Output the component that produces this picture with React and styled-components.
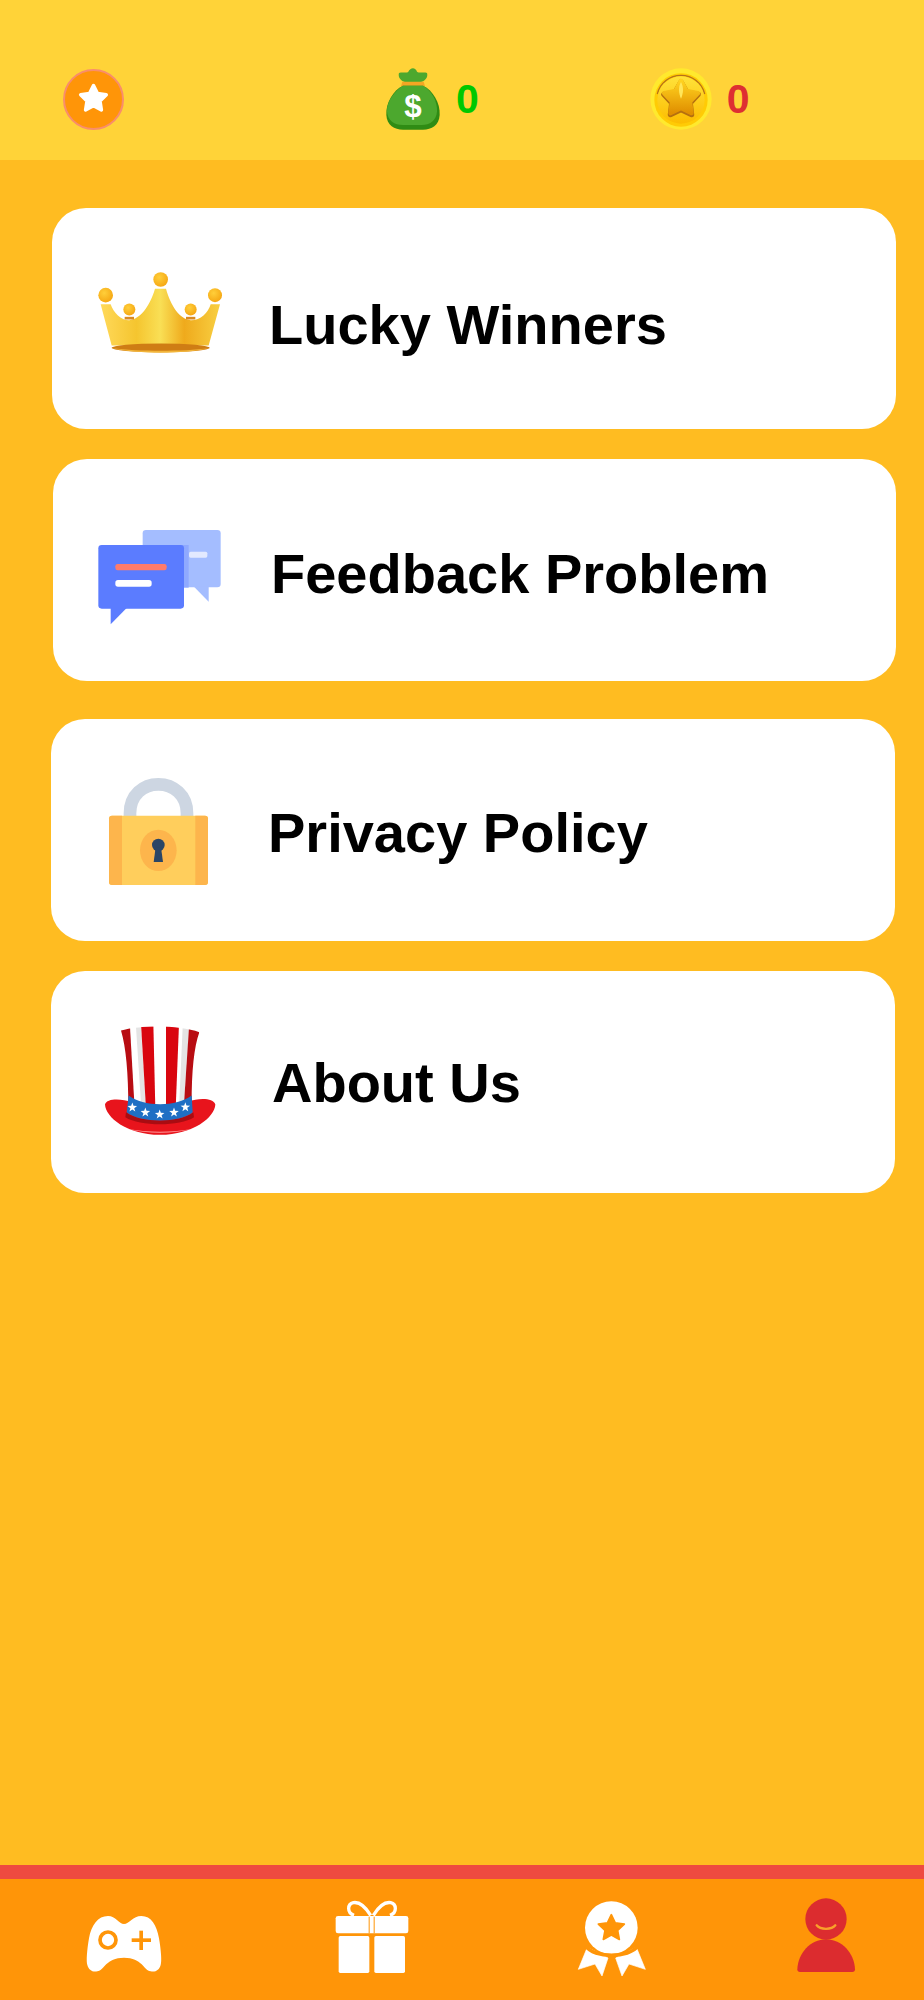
import React from "react";
import styled, { createGlobalStyle } from "styled-components";

const GlobalStyle = createGlobalStyle`
    html, body {
        margin: 0;
        padding: 0;
        background: #ffbc21;
        font-family: "Liberation Sans", Arial, sans-serif;
    }
`;

const Page = styled.div`
    display: flex;
    flex-direction: column;
    min-height: 100vh;
    background: #ffbc21;
`;

const TopBar = styled.header`
    display: flex;
    align-items: center;
    box-sizing: border-box;
    height: 160px;
    padding: 38px 0 0 63px;
    background: #ffd338;
`;

const Badge = styled.div`
    display: flex;
    align-items: center;
    justify-content: center;
    box-sizing: border-box;
    width: 61px;
    height: 61px;
    border: 2px solid #f98d6c;
    border-radius: 50%;
    background: #ff9508;
`;

const Wallet = styled.div`
    display: flex;
    align-items: center;
    margin-left: ${(p) => p.$left}px;
`;

const Amount = styled.span`
    margin-left: ${(p) => p.$gap}px;
    font-size: 41px;
    font-weight: 700;
    line-height: 62px;
    color: ${(p) => p.$color};
`;

const Menu = styled.main`
    display: flex;
    flex-direction: column;
    flex: 1;
`;

const Card = styled.div`
    display: flex;
    align-items: center;
    box-sizing: border-box;
    height: 221.5px;
    margin: ${(p) => p.$top}px ${(p) => p.$right}px 0 ${(p) => p.$left}px;
    padding-left: 38px;
    border-radius: 34px;
    background: #ffffff;
`;

const Label = styled.span`
    margin-left: ${(p) => p.$indent}px;
    padding-top: ${(p) => p.$drop}px;
    font-size: 56px;
    font-weight: 700;
    color: #000000;
`;

const BottomNav = styled.nav`
    display: grid;
    grid-template-columns: 247px 249px 231px 197px;
    box-sizing: border-box;
    height: 135px;
    padding-top: 11px;
    border-top: 14px solid #ee4a40;
    background: #ff9508;
`;

const NavItem = styled.div`
    display: flex;
    justify-content: center;
`;

const starPoints = (cx, cy, outer, inner) =>
    Array.from({ length: 10 }, (_, i) => {
        const r = i % 2 ? inner : outer;
        const a = (Math.PI / 5) * i - Math.PI / 2;
        return `${(cx + r * Math.cos(a)).toFixed(1)},${(cy + r * Math.sin(a)).toFixed(1)}`;
    }).join(" ");

const BadgeStar = () => (
    <svg width="34" height="34" viewBox="0 0 34 34">
        <polygon
            points={starPoints(16.5, 17, 13.5, 6.8)}
            fill="#fff"
            stroke="#fff"
            strokeWidth="3.5"
            strokeLinejoin="round"
        />
    </svg>
);

const MoneyBag = () => (
    <svg width="56" height="62" viewBox="76 55 168 186">
        <path d="M118 70 C130 66 140 72 146 66 C152 52 168 52 172 66 C180 72 192 66 202 70 C206 84 196 94 182 98 L138 98 C124 94 114 84 118 70 Z" fill="#4ca82e" />
        <path d="M128 96 L192 96 L196 110 L124 110 Z" fill="#f5a623" />
        <path d="M130 108 L190 108 C220 122 242 160 240 196 C238 228 216 240 190 240 L130 240 C104 240 82 228 80 196 C78 160 100 122 130 108 Z" fill="#2f8c14" />
        <path d="M130 108 L190 108 C216 122 234 156 232 186 C230 212 210 226 186 226 L130 226 C104 226 84 212 82 186 C80 156 106 122 130 108 Z" fill="#4ca82e" />
        <text x="160" y="203" textAnchor="middle" fontFamily="Liberation Sans" fontWeight="700" fontSize="94" fill="#fff">$</text>
    </svg>
);

const Coin = () => (
    <svg width="62" height="62" viewBox="58 54 186 186">
        <defs>
            <linearGradient id="coinFace" x1="0" y1="0" x2="0" y2="1">
                <stop offset="0" stopColor="#ffe23a" />
                <stop offset="1" stopColor="#fcbc00" />
            </linearGradient>
            <linearGradient id="coinStar" x1="0" y1="0" x2="0" y2="1">
                <stop offset="0" stopColor="#ffd21f" />
                <stop offset="1" stopColor="#e08f00" />
            </linearGradient>
        </defs>
        <circle cx="151" cy="147" r="92" fill="#ffe92e" />
        <circle cx="151" cy="150" r="80" fill="#ffcb05" />
        <path d="M80 132 A73 73 0 0 1 222 132" fill="none" stroke="#b8711a" strokeWidth="4" />
        <circle cx="151" cy="150" r="71" fill="url(#coinFace)" />
        <polygon points={starPoints(151, 150, 54, 29)} fill="#b5700f" stroke="#b5700f" strokeWidth="16" strokeLinejoin="round" />
        <polygon points={starPoints(151, 146, 53, 28)} fill="url(#coinStar)" stroke="url(#coinStar)" strokeWidth="14" strokeLinejoin="round" />
        <path d="M151 96 C160 112 158 130 151 146 C144 130 142 112 151 96 Z" fill="#ffe65a" />
    </svg>
);

const Crown = () => (
    <svg width="140" height="140" viewBox="150 145.5 420 420">
        <defs>
            <linearGradient id="crownBody" x1="0" y1="0" x2="1" y2="0">
                <stop offset="0" stopColor="#ffd95a" />
                <stop offset="0.3" stopColor="#f5c52f" />
                <stop offset="0.5" stopColor="#f9df55" />
                <stop offset="0.7" stopColor="#efaa1c" />
                <stop offset="1" stopColor="#f8cf42" />
            </linearGradient>
            <radialGradient id="crownBall" cx="0.4" cy="0.35" r="0.7">
                <stop offset="0" stopColor="#ffcf3a" />
                <stop offset="1" stopColor="#f5a511" />
            </radialGradient>
        </defs>
        <path d="M182 314 L212 314 C220 340 245 363 268 362 C300 360 330 320 345 268 L378 268 C392 320 420 360 452 362 C480 363 505 340 512 314 L540 314 L506 438 L215 438 Z" fill="url(#crownBody)" />
        <ellipse cx="362" cy="445" rx="147" ry="13" fill="#cf7d14" />
        <path d="M215 446 C300 456 425 456 509 446 C425 464 300 464 215 446 Z" fill="#f2b53a" />
        <rect x="254" y="352" width="28" height="8" fill="#d98a22" />
        <rect x="438" y="352" width="28" height="8" fill="#d98a22" />
        <circle cx="197" cy="287" r="22" fill="url(#crownBall)" />
        <circle cx="362" cy="240" r="22" fill="url(#crownBall)" />
        <circle cx="525" cy="287" r="21" fill="url(#crownBall)" />
        <circle cx="268" cy="330" r="18" fill="url(#crownBall)" />
        <circle cx="452" cy="330" r="18" fill="url(#crownBall)" />
    </svg>
);

const Chat = () => (
    <svg width="140" height="140" viewBox="153 150 420 420">
        <rect x="308" y="240" width="234" height="172" rx="10" fill="#a4bdff" />
        <polygon points="462,410 506,410 506,455" fill="#a4bdff" />
        <rect x="420" y="285" width="26" height="128" fill="#8fa9ff" />
        <rect x="447" y="305" width="55" height="18" rx="5" fill="#e2e9ff" />
        <rect x="175" y="285" width="257" height="191" rx="10" fill="#5b7cff" />
        <polygon points="212,474 260,474 212,523" fill="#5b7cff" />
        <rect x="226" y="342" width="154" height="19" rx="7" fill="#ff7b6b" />
        <rect x="226" y="390" width="109" height="20" rx="8" fill="#ffffff" />
    </svg>
);

const Lock = () => (
    <svg width="140" height="140" viewBox="147 150 420 420">
        <path d="M270 325 L270 310 C270 255 310 223 355 223 C400 223 441 255 441 310 L441 325" fill="none" stroke="#cdd6e2" strokeWidth="38" />
        <rect x="207" y="317" width="297" height="208" rx="9" fill="#ffce5c" />
        <path d="M216 317 L246 317 L246 525 L216 525 Q207 525 207 516 L207 326 Q207 317 216 317 Z" fill="#fdb54c" />
        <path d="M466 317 L495 317 Q504 317 504 326 L504 516 Q504 525 495 525 L466 525 Z" fill="#fdb54c" />
        <ellipse cx="355" cy="421" rx="55" ry="62" fill="#fdb54c" />
        <circle cx="355" cy="405" r="19" fill="#2b4566" />
        <polygon points="347,412 363,412 369,456 341,456" fill="#2b4566" />
    </svg>
);

const Hat = () => (
    <svg width="140" height="140" viewBox="147 154.5 420 420">
        <defs>
            <clipPath id="hatCrown">
                <path d="M243 210 C300 193 420 193 478 215 C462 260 455 330 455 430 L265 440 C265 340 258 260 243 210 Z" />
            </clipPath>
        </defs>
        <path d="M195 432 C200 412 245 415 275 424 L445 424 C475 412 520 412 526 432 C524 470 460 523 360 523 C260 523 197 470 195 432 Z" fill="#e8141c" />
        <path d="M258 455 C300 488 420 488 460 455 L462 470 C420 498 300 498 256 470 Z" fill="#a90c12" />
        <path d="M262 505 C320 517 400 517 458 505 C400 521 320 521 262 505 Z" fill="#ff9a9a" />
        <g clipPath="url(#hatCrown)">
            <rect x="240" y="190" width="240" height="260" fill="#ffffff" />
            <polygon points="288,200 303,200 318,445 304,445" fill="#e4e4e4" />
            <polygon points="428,200 447,200 431,445 417,445" fill="#e4e4e4" />
            <polygon points="240,200 270,200 284,445 262,445" fill="#b80c12" />
            <polygon points="303,190 340,190 346,445 318,445" fill="#d9060f" />
            <polygon points="378,190 417,190 407,445 378,445" fill="#d9060f" />
            <polygon points="447,200 480,200 456,445 431,445" fill="#b80c12" />
        </g>
        <path d="M266 405 C310 440 410 440 455 405 L458 455 C420 488 300 488 260 455 Z" fill="#1f6fc4" />
        <polygon points={starPoints(277, 441, 15, 6)} fill="#ffffff" />
        <polygon points={starPoints(316, 456, 15, 6)} fill="#ffffff" />
        <polygon points={starPoints(359, 462, 15, 6)} fill="#ffffff" />
        <polygon points={starPoints(402, 456, 15, 6)} fill="#ffffff" />
        <polygon points={starPoints(436, 440, 15, 6)} fill="#ffffff" />
    </svg>
);

const GamepadIcon = () => (
    <svg width="90" height="90" viewBox="235 120 270 270">
        <path d="M322 198 C345 198 355 222 370 222 C385 222 397 198 422 198 C452 198 468 225 475 265 C481 300 484 335 480 345 C476 360 465 367 450 364 C428 360 425 323 370 323 C315 323 312 360 290 364 C275 367 264 360 260 345 C256 335 259 300 265 265 C272 225 292 198 322 198 Z" fill="#fff" />
        <circle cx="322" cy="270" r="24" fill="none" stroke="#ff9508" strokeWidth="11" />
        <rect x="393" y="265" width="58" height="11" fill="#ff9508" />
        <rect x="416" y="242" width="11" height="58" fill="#ff9508" />
    </svg>
);

const GiftIcon = () => (
    <svg width="90" height="90" viewBox="979 120 270 270">
        <path d="M1110 196 C1095 172 1075 155 1058 158 C1040 162 1038 188 1060 196 M1118 196 C1133 172 1153 155 1170 158 C1188 162 1190 188 1168 196" fill="none" stroke="#fff" strokeWidth="10" />
        <rect x="1005" y="198" width="218" height="52" rx="7" fill="#fff" />
        <rect x="1014" y="258" width="92" height="111" rx="5" fill="#fff" />
        <rect x="1121" y="258" width="92" height="111" rx="5" fill="#fff" />
        <rect x="1104" y="200" width="3" height="50" fill="#ff9508" />
        <rect x="1119" y="200" width="3" height="50" fill="#ff9508" />
    </svg>
);

const MedalIcon = () => (
    <svg width="90" height="90" viewBox="314 120 270 270">
        <circle cx="447" cy="233" r="79" fill="#fff" />
        <polygon points={starPoints(447, 235, 41, 20)} fill="#ff9508" stroke="#ff9508" strokeWidth="5" strokeLinejoin="round" />
        <polygon points="375,292 437,324 419,378 398,342 348,358" fill="#fff" stroke="#fff" strokeWidth="2" strokeLinejoin="round" />
        <polygon points="522,292 460,324 479,378 500,342 549,358" fill="#fff" stroke="#fff" strokeWidth="2" strokeLinejoin="round" />
        <path d="M370 288 C395 325 500 325 527 288" fill="none" stroke="#ff9508" strokeWidth="11" />
    </svg>
);

const PersonIcon = () => (
    <svg width="90" height="90" viewBox="952 120 270 270">
        <circle cx="1087" cy="207" r="62" fill="#dc2c2f" />
        <path d="M1001 358 C1003 310 1040 268 1087 268 C1135 268 1172 310 1174 358 Q1174 366 1166 366 L1009 366 Q1001 366 1001 358 Z" fill="#dc2c2f" />
        <path d="M1059 226 C1070 240 1104 240 1115 226" fill="none" stroke="#f9a02a" strokeWidth="7" strokeLinecap="round" />
    </svg>
);

const App = () => (
    <Page>
        <GlobalStyle />
        <TopBar>
            <Badge>
                <BadgeStar />
            </Badge>
            <Wallet $left={261}>
                <MoneyBag />
                <Amount $gap={15} $color="#00c800">0</Amount>
            </Wallet>
            <Wallet $left={171}>
                <Coin />
                <Amount $gap={15} $color="#de2f32">0</Amount>
            </Wallet>
        </TopBar>
        <Menu>
            <Card $top={47.5} $left={52} $right={28}>
                <Crown />
                <Label $indent={39} $drop={12}>Lucky Winners</Label>
            </Card>
            <Card $top={30} $left={53} $right={28}>
                <Chat />
                <Label $indent={40} $drop={8}>Feedback Problem</Label>
            </Card>
            <Card $top={38.5} $left={51} $right={29}>
                <Lock />
                <Label $indent={39} $drop={5}>Privacy Policy</Label>
            </Card>
            <Card $top={30.5} $left={51} $right={29}>
                <Hat />
                <Label $indent={43} $drop={2}>About Us</Label>
            </Card>
        </Menu>
        <BottomNav>
            <NavItem><GamepadIcon /></NavItem>
            <NavItem><GiftIcon /></NavItem>
            <NavItem><MedalIcon /></NavItem>
            <NavItem><PersonIcon /></NavItem>
        </BottomNav>
    </Page>
);

export default App;
